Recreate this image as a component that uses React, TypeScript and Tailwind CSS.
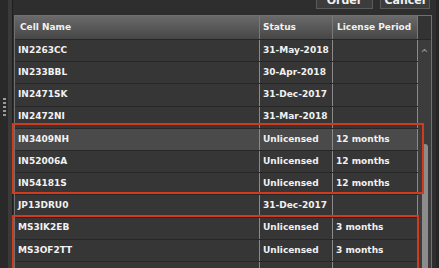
import { ChevronUp } from "lucide-react";

type Row = { name: string; status: string; period: string; selected?: boolean };

const rows: Row[] = [
  { name: "IN2263CC", status: "31-May-2018", period: "" },
  { name: "IN233BBL", status: "30-Apr-2018", period: "" },
  { name: "IN2471SK", status: "31-Dec-2017", period: "" },
  { name: "IN2472NI", status: "31-Mar-2018", period: "" },
  { name: "IN3409NH", status: "Unlicensed", period: "12 months", selected: true },
  { name: "IN52006A", status: "Unlicensed", period: "12 months" },
  { name: "IN54181S", status: "Unlicensed", period: "12 months" },
  { name: "JP13DRU0", status: "31-Dec-2017", period: "" },
  { name: "MS3IK2EB", status: "Unlicensed", period: "3 months" },
  { name: "MS3OF2TT", status: "Unlicensed", period: "3 months" },
  { name: "MS3OP2QF", status: "Unlicensed", period: "3 months" },
];

export default function App() {
  return (
    <div
      className="relative flex h-[268px] w-[439px] overflow-hidden bg-[#2e2e2e] text-[9px] font-bold text-[#f1f1f1]"
      style={{ fontFamily: '"DejaVu Sans", Verdana, sans-serif' }}
    >
      {/* left grip strip */}
      <div className="flex w-[8px] flex-col items-center bg-[#292929] pt-[98px]">
        <div className="flex flex-col gap-[2px]">
          {[0, 1, 2, 3, 4].map((i) => (
            <div key={i} className="h-[2px] w-[3px] bg-[#9a9a9a]" />
          ))}
        </div>
      </div>
      <div className="w-[4px] bg-[#3a3a3a]" />
      <div className="w-[1px] bg-[#1e1e1e]" />

      <div className="flex min-h-0 flex-1 flex-col">
        {/* top buttons */}
        <div className="flex h-[15px] shrink-0 justify-end gap-[7px] pr-[6px]">
          <div className="-mt-[11px] flex h-[20px] w-[57px] items-center justify-center border border-[#5a5a5a] bg-[#3c3c3c] pt-[4px] text-[11px]">
            Order
          </div>
          <div className="-mt-[11px] flex h-[20px] w-[50px] items-center justify-center border border-[#5a5a5a] bg-[#3c3c3c] pt-[4px] text-[11px]">
            Cancel
          </div>
        </div>

        {/* table */}
        <div className="ml-[1px] mr-[4px] flex min-h-0 flex-1 flex-col overflow-hidden border-l border-t border-r border-[#707070] bg-[#343434]">
          <div className="flex h-[24px] shrink-0 border-b border-[#262626]">
            <div className="flex w-[244px] items-center bg-gradient-to-b from-[#6a6a6a] to-[#474747] pl-[5px]">
              Cell Name
            </div>
            <div className="flex w-[73px] items-center border-l border-[#7a7a7a] bg-gradient-to-b from-[#6a6a6a] to-[#474747] pl-[3px]">
              Status
            </div>
            <div className="flex w-[86px] items-center border-l border-[#7a7a7a] border-r border-r-[#7a7a7a] bg-gradient-to-b from-[#6a6a6a] to-[#474747] pl-[4px]">
              License Period
            </div>
            <div className="flex-1 bg-[#333333]" />
          </div>

          <div className="flex min-h-0 flex-1 overflow-hidden">
            <div className="flex w-[403px] flex-col">
              {rows.map((r) => (
                <div
                  key={r.name}
                  className={`flex h-[22.2px] shrink-0 border-b border-[#272727] ${
                    r.selected ? "bg-[#4a4a4a]" : "bg-[#363636]"
                  }`}
                >
                  <div className="flex w-[244px] items-center pl-[3px]">{r.name}</div>
                  <div className="flex w-[73px] items-center border-l border-[#8a8a8a] pl-[3px]">
                    {r.status}
                  </div>
                  <div className="flex w-[86px] items-center border-l border-[#8a8a8a] border-r border-r-[#8a8a8a] pl-[3px]">
                    {r.period}
                  </div>
                </div>
              ))}
            </div>
            {/* scrollbar */}
            <div className="flex flex-1 flex-col items-center bg-[#3c3c3c] pt-[6px]">
              <ChevronUp size={9} strokeWidth={3} className="text-[#8a8a8a]" />
              <div className="mt-[89px] w-[6px] flex-1 rounded-t-[3px] bg-[#8c8c8c]" />
            </div>
          </div>
        </div>
      </div>
      <div className="w-[3px] bg-[#262626]" />

      {/* annotation boxes */}
      <div className="absolute left-[12px] top-[123px] h-[71px] w-[412px] border-[2.5px] border-[#d23a1e]" />
      <div className="absolute left-[12px] top-[215px] h-[80px] w-[407px] border-[2.5px] border-[#d23a1e]" />
    </div>
  );
}
